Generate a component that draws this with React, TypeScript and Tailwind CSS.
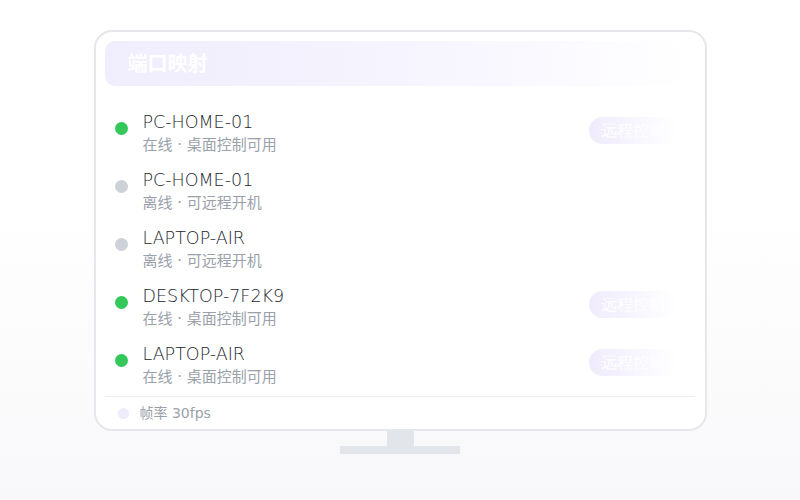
import React from "react";

type Device = {
  name: string;
  online: boolean;
};

const devices: Device[] = [
  { name: "PC-HOME-01", online: true },
  { name: "PC-HOME-01", online: false },
  { name: "LAPTOP-AIR", online: false },
  { name: "DESKTOP-7F2K9", online: true },
  { name: "LAPTOP-AIR", online: true },
];

function DeviceRow({ name, online }: Device) {
  return (
    <div className="flex h-[58px] items-center pl-[10px] pr-[19px]">
      <span
        className={`mt-[-10px] h-[13px] w-[13px] shrink-0 rounded-full ${
          online ? "bg-[#34c759]" : "bg-[#cdd1d8]"
        }`}
      />
      <div className="ml-[15px] flex flex-col">
        <span className="text-[17.5px] font-light leading-[23px] text-[#22272e]">{name}</span>
        <span className="mt-[1px] text-[15px] leading-[20px] text-[#9ba1aa]">
          {online ? "在线 · 桌面控制可用" : "离线 · 可远程开机"}
        </span>
      </div>
      {online && (
        <button className="ml-auto mt-[-5px] flex h-[27px] w-[88px] items-center rounded-full bg-gradient-to-r from-[#efebfd] to-white pl-[12px] font-serif text-[16px] text-white">
          远程控制
        </button>
      )}
    </div>
  );
}

export default function App() {
  return (
    <div
      className="flex h-[500px] w-[800px] flex-col items-center bg-gradient-to-b from-white from-40% to-[#f8f8fa] pt-[30px]"
      style={{ fontFamily: '"DejaVu Sans", "Noto Sans CJK SC", sans-serif' }}
    >
      {/* Monitor */}
      <div className="flex h-[401px] w-[613px] flex-col rounded-[18px] border-2 border-[#e5e7eb] bg-white p-[9px] pb-0">
        {/* Header */}
        <div className="flex h-[45px] shrink-0 items-center rounded-[10px] bg-gradient-to-r from-[#f0edfd] via-[#f6f4fe] to-white px-[23px]">
          <span className="text-[20px] font-bold text-white">端口映射</span>
        </div>

        {/* Device list */}
        <div className="mt-[18px] flex flex-col">
          {devices.map((d, i) => (
            <DeviceRow key={i} {...d} />
          ))}
        </div>

        {/* Footer */}
        <div className="mt-[2px] mr-[1px] border-t border-[#eceef1]" />
        <div className="flex h-[33px] items-center pl-[13px]">
          <span className="h-[11px] w-[11px] rounded-full bg-[#eeebfb]" />
          <span className="ml-[11px] text-[14px] text-[#9ba1aa]">帧率 30fps</span>
        </div>
      </div>

      {/* Stand */}
      <div className="h-[15px] w-[27px] bg-[#e2e5e9]" />
      <div className="h-[8px] w-[120px] bg-[#e2e5e9]" />
    </div>
  );
}
